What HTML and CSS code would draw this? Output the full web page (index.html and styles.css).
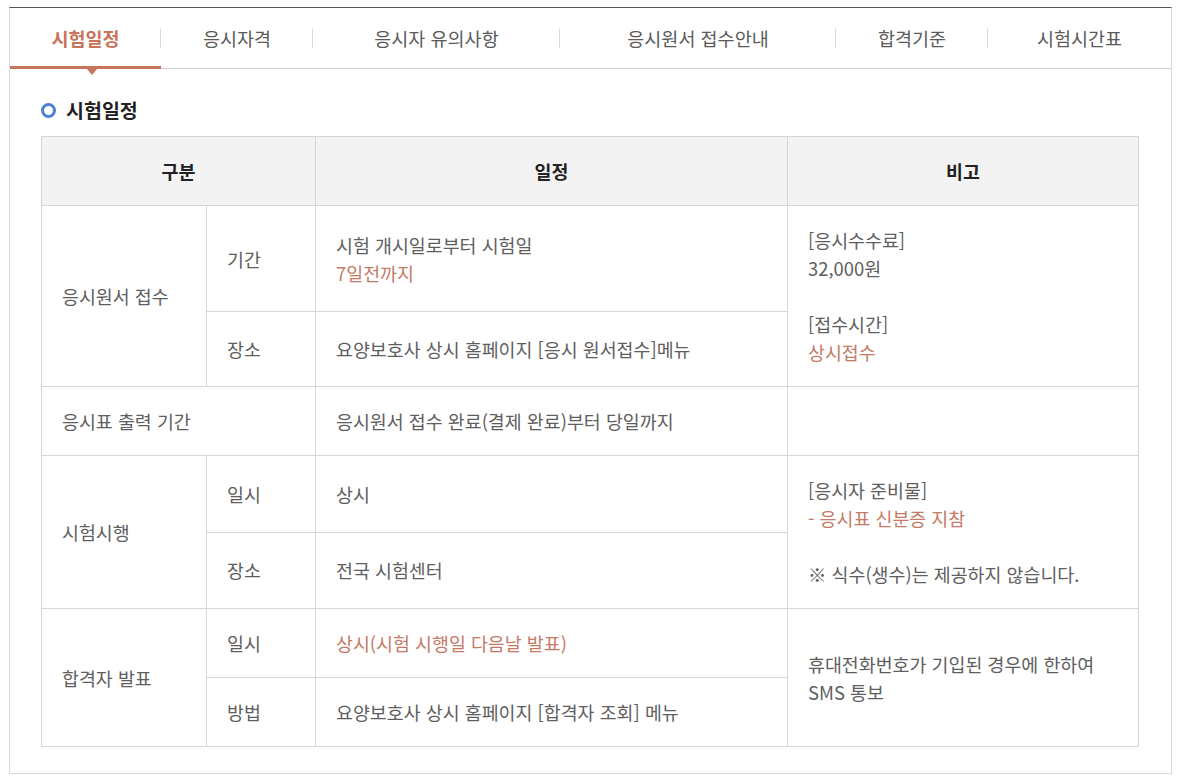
FILE: index.html
```html
<!DOCTYPE html>
<html lang="ko">
<head>
<meta charset="utf-8">
<title>시험일정</title>
<link rel="stylesheet" href="styles.css">
</head>
<body>
<div class="panel">
  <ul class="tabs">
    <li class="tab active">시험일정<span class="arrow"></span></li>
    <li class="tab">응시자격</li>
    <li class="tab">응시자 유의사항</li>
    <li class="tab">응시원서 접수안내</li>
    <li class="tab">합격기준</li>
    <li class="tab last">시험시간표</li>
  </ul>
  <div class="content">
    <h2 class="title"><span class="ring"></span>시험일정</h2>
    <table class="schedule">
      <colgroup>
        <col class="c1"><col class="c2"><col class="c3"><col class="c4">
      </colgroup>
      <thead>
        <tr><th colspan="2">구분</th><th>일정</th><th>비고</th></tr>
      </thead>
      <tbody>
        <tr class="r1">
          <td rowspan="2">응시원서 접수</td>
          <td>기간</td>
          <td>시험 개시일로부터 시험일<br><span class="hl">7일전까지</span></td>
          <td rowspan="2" class="top">[응시수수료]<br>32,000원<br><br>[접수시간]<br><span class="hl">상시접수</span></td>
        </tr>
        <tr class="r2">
          <td>장소</td>
          <td>요양보호사 상시 홈페이지 [응시 원서접수]메뉴</td>
        </tr>
        <tr>
          <td colspan="2">응시표 출력 기간</td>
          <td>응시원서 접수 완료(결제 완료)부터 당일까지</td>
          <td></td>
        </tr>
        <tr>
          <td rowspan="2">시험시행</td>
          <td>일시</td>
          <td>상시</td>
          <td rowspan="2" class="top">[응시자 준비물]<br><span class="hl">- 응시표 신분증 지참</span><br><br>※ 식수(생수)는 제공하지 않습니다.</td>
        </tr>
        <tr>
          <td>장소</td>
          <td>전국 시험센터</td>
        </tr>
        <tr>
          <td rowspan="2">합격자 발표</td>
          <td>일시</td>
          <td><span class="hl">상시(시험 시행일 다음날 발표)</span></td>
          <td rowspan="2">휴대전화번호가 기입된 경우에 한하여<br>SMS 통보</td>
        </tr>
        <tr>
          <td>방법</td>
          <td>요양보호사 상시 홈페이지 [합격자 조회] 메뉴</td>
        </tr>
      </tbody>
    </table>
  </div>
</div>
</body>
</html>
```

FILE: styles.css
```css
html, body {
  margin: 0;
  padding: 0;
  background: #fff;
}
body {
  padding: 7px 11px 0 9px;
  font-family: "Noto Sans CJK KR", "Noto Sans", sans-serif;
  color: #5e5e5e;
}
.panel {
  border: 1px solid #d8d8d8;
  border-top: 1px solid #555;
  height: 765px;
  box-sizing: content-box;
}
.tabs {
  list-style: none;
  margin: 0;
  padding: 0;
  display: grid;
  grid-template-columns: 151px 152px 247px 276px 152px 1fr;
  border-bottom: 1px solid #cfcfcf;
}
.tab {
  position: relative;
  height: 60px;
  display: flex;
  align-items: center;
  justify-content: center;
  font-size: 18.5px;
  color: #5a5a5a;
  box-sizing: border-box;
}
.tab::after {
  content: "";
  position: absolute;
  right: 0;
  top: 20px;
  width: 1px;
  height: 20px;
  background: #dcdcdc;
}
.tab.last::after {
  display: none;
}
.tab.active {
  color: #c8735a;
  font-weight: 700;
  border-bottom: 3px solid #c8735a;
  margin-bottom: -1px;
  height: 61px;
  padding-top: 1px;
}
.arrow {
  position: absolute;
  left: 77px;
  bottom: -9px;
  width: 0;
  height: 0;
  border-left: 5px solid transparent;
  border-right: 5px solid transparent;
  border-top: 6px solid #c8735a;
}
.content {
  padding: 28px 32px 26px 31px;
}
.title {
  margin: 0 0 13px;
  display: flex;
  align-items: center;
  font-size: 19.5px;
  line-height: 26px;
  font-weight: 700;
  color: #222;
}
.ring {
  width: 9px;
  height: 9px;
  border: 3px solid #4f80d8;
  border-radius: 50%;
  margin-right: 10px;
  flex: none;
}
.schedule {
  width: 100%;
  border-collapse: collapse;
  table-layout: fixed;
  font-size: 18.4px;
  line-height: 28px;
}
.c1 { width: 165px; }
.c2 { width: 109px; }
.c3 { width: 472px; }
.c4 { width: auto; }
.schedule th,
.schedule td {
  border: 1px solid #d6d6d6;
  padding: 20px 20px;
  text-align: left;
  vertical-align: middle;
  color: #5e5e5e;
  font-weight: 400;
}
.schedule th {
  background: #f3f3f3;
  text-align: center;
  font-weight: 700;
  color: #222;
}
.schedule td.top {
  vertical-align: top;
}
.r1 { height: 106px; }
.r2 { height: 75px; }
.hl {
  color: #c47a66;
}
```
